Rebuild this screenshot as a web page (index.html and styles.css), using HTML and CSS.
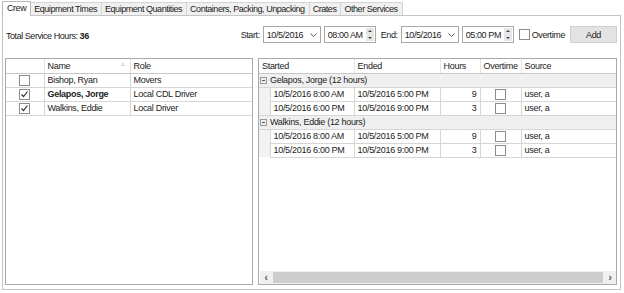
FILE: index.html
```html
<!DOCTYPE html>
<html><head>
  <title>Crew</title>
  <meta charset="UTF-8">
  <link rel="stylesheet" href="styles.css">
</head>
<body>
  <div class="tabs">
    <div class="tab active">Crew</div>
    <div class="tab">Equipment Times</div>
    <div class="tab">Equipment Quantities</div>
    <div class="tab">Containers, Packing, Unpacking</div>
    <div class="tab">Crates</div>
    <div class="tab">Other Services</div>
  </div>
  <div class="panel">
    <div class="toolbar">
      <div class="total">Total Service Hours: <b>36</b></div>
      <div class="range">
        <span class="lbl">Start:</span>
        <div class="date">10/5/2016<svg class="chev" width="7" height="4" viewBox="0 0 7 4"><polyline points="0.5,0.5 3.5,3.5 6.5,0.5" fill="none" stroke="#555" stroke-width="1"/></svg></div>
        <div class="time">08:00 AM<span class="spin"><i class="up"></i><i class="down"></i></span></div>
        <span class="lbl end">End:</span>
        <div class="date">10/5/2016<svg class="chev" width="7" height="4" viewBox="0 0 7 4"><polyline points="0.5,0.5 3.5,3.5 6.5,0.5" fill="none" stroke="#555" stroke-width="1"/></svg></div>
        <div class="time">05:00 PM<span class="spin"><i class="up"></i><i class="down"></i></span></div>
        <label class="ot"><span class="cb"></span>Overtime</label>
        <button class="add" type="button">Add</button>
      </div>
    </div>
    <div class="grids">
      <div class="grid left">
        <table class="tbl">
          <colgroup><col class="c-chk"><col class="c-name"><col></colgroup>
          <tr class="head"><td></td><td class="sort">Name<span class="tri">&#9653;</span></td><td>Role</td></tr>
          <tr><td class="mid"><span class="cb"></span></td><td>Bishop, Ryan</td><td>Movers</td></tr>
          <tr><td class="mid"><span class="cb on"><svg width="9" height="9" viewBox="0 0 9 9"><polyline points="1.5,4.5 3.5,6.5 7.5,1.5" fill="none" stroke="#333" stroke-width="1.2"/></svg></span></td><td class="bold">Gelapos, Jorge</td><td>Local CDL Driver</td></tr>
          <tr><td class="mid"><span class="cb on"><svg width="9" height="9" viewBox="0 0 9 9"><polyline points="1.5,4.5 3.5,6.5 7.5,1.5" fill="none" stroke="#333" stroke-width="1.2"/></svg></span></td><td>Walkins, Eddie</td><td>Local Driver</td></tr>
        </table>
      </div>
      <div class="grid right">
        <table class="tbl">
          <colgroup><col class="c-ind"><col class="c-start"><col class="c-end"><col class="c-hrs"><col class="c-ot"><col></colgroup>
          <tr class="head"><td colspan="2">Started</td><td>Ended</td><td>Hours</td><td class="mid">Overtime</td><td>Source</td></tr>
          <tr class="group"><td colspan="6"><span class="minus"></span>Gelapos, Jorge (12 hours)</td></tr>
          <tr><td class="ind"></td><td>10/5/2016 8:00 AM</td><td>10/5/2016 5:00 PM</td><td class="num">9</td><td class="mid"><span class="cb"></span></td><td>user, a</td></tr>
          <tr><td class="ind"></td><td>10/5/2016 6:00 PM</td><td>10/5/2016 9:00 PM</td><td class="num">3</td><td class="mid"><span class="cb"></span></td><td>user, a</td></tr>
          <tr class="group"><td colspan="6"><span class="minus"></span>Walkins, Eddie (12 hours)</td></tr>
          <tr><td class="ind"></td><td>10/5/2016 8:00 AM</td><td>10/5/2016 5:00 PM</td><td class="num">9</td><td class="mid"><span class="cb"></span></td><td>user, a</td></tr>
          <tr><td class="ind"></td><td>10/5/2016 6:00 PM</td><td>10/5/2016 9:00 PM</td><td class="num">3</td><td class="mid"><span class="cb"></span></td><td>user, a</td></tr>
        </table>
        <div class="hscroll">
          <span class="arr">&#8249;</span>
          <div class="thumb"></div>
          <span class="arr">&#8250;</span>
        </div>
      </div>
    </div>
  </div>
</body></html>
```

FILE: styles.css
```css
body {
  margin: 0;
  background: #fff;
  font-family: "Liberation Sans", Arial, sans-serif;
  font-size: 9px;
  letter-spacing: -0.3px;
  color: #222;
}
.tabs {
  display: flex;
  align-items: flex-end;
  height: 15px;
  padding-left: 2px;
  padding-top: 1px;
  box-sizing: border-box;
  letter-spacing: -0.45px;
}
.tab {
  height: 13px;
  line-height: 12px;
  padding: 0 4px 0 3px;
  background: #f0f0f0;
  border: 1px solid #d4d4d4;
  border-bottom: none;
  border-left: none;
  box-sizing: border-box;
}
.tab.active {
  height: 15px;
  line-height: 13px;
  background: #fff;
  border: 1px solid #b8b8b8;
  border-bottom: none;
  margin-bottom: -1px;
  position: relative;
  z-index: 1;
  padding: 0 4px;
}
.panel {
  margin-left: 2px;
  width: 619px;
  height: 275px;
  border: 1px solid #c4c4c4;
  box-sizing: border-box;
  padding: 0 3px 0 2px;
}
.toolbar {
  display: flex;
  justify-content: space-between;
  height: 42px;
}
.total {
  padding-top: 15px;
  padding-left: 1px;
  letter-spacing: -0.45px;
}
.range {
  display: flex;
  align-items: center;
  height: 17px;
  margin-top: 10px;
  letter-spacing: -0.4px;
}
.lbl {
  margin-right: 3px;
}
.lbl.end {
  margin-left: 5px;
}
.date,
.time {
  display: flex;
  align-items: center;
  justify-content: space-between;
  height: 17px;
  box-sizing: border-box;
  border: 1px solid #a8a8a8;
  padding-left: 3px;
  background: #fff;
}
.date {
  width: 58px;
  padding-right: 3px;
  margin-right: 3px;
}
.time {
  width: 52px;
  padding-right: 1px;
}
.spin {
  display: flex;
  flex-direction: column;
  justify-content: space-around;
  align-items: center;
  width: 8px;
  height: 13px;
  background: #e6e6e6;
}
.spin i {
  width: 0;
  height: 0;
  border-left: 2px solid transparent;
  border-right: 2px solid transparent;
}
.spin .up {
  border-bottom: 2px solid #444;
}
.spin .down {
  border-top: 2px solid #444;
}
.ot {
  display: flex;
  align-items: center;
  margin-left: 5px;
}
.ot .cb {
  margin-right: 2px;
}
.add {
  margin-left: 5px;
  width: 47px;
  height: 17px;
  border: 1px solid #cfcfcf;
  background: #e3e3e3;
  font: inherit;
  letter-spacing: inherit;
  color: #222;
  padding: 0;
}
.cb {
  display: inline-block;
  width: 9px;
  height: 9px;
  border: 1px solid #8c8c8c;
  background: #fff;
  vertical-align: middle;
  box-sizing: content-box;
  line-height: 0;
}
.grids {
  display: flex;
  gap: 5px;
  height: 227px;
}
.grid {
  border: 1px solid #a9a9a9;
  box-sizing: border-box;
  background: #fff;
}
.grid.left {
  width: 248px;
}
.grid.right {
  flex: 1;
  display: flex;
  flex-direction: column;
  justify-content: space-between;
}
.tbl {
  width: 100%;
  border-collapse: collapse;
  table-layout: fixed;
  font-size: inherit;
}
.tbl td {
  height: 14px;
  padding: 0 3px;
  border: 1px solid #d6d6d6;
  white-space: nowrap;
  overflow: hidden;
  box-sizing: border-box;
}
.tbl tr:first-child td {
  border-top: none;
}
.tbl tr td:first-child {
  border-left: none;
}
.tbl tr td:last-child {
  border-right: none;
}
.tbl .head td {
  border-left: none;
  border-right: 1px solid #e4e4e4;
  border-bottom: 1px solid #c8c8c8;
}
.c-chk { width: 38px; }
.c-name { width: 86px; }
.left .tbl tr:not(.head) td:first-child {
  border-right: none;
}
.mid {
  text-align: center;
}
.bold {
  font-weight: bold;
}
.sort {
  position: relative;
}
.tri {
  position: absolute;
  right: 5px;
  top: 1px;
  color: #b0b0b0;
  font-size: 7px;
}
.c-ind { width: 11px; }
.c-start { width: 84px; }
.c-end { width: 86px; }
.c-hrs { width: 40px; }
.c-ot { width: 41px; }
.tbl td.ind {
  background: #f2f2f2;
  border-top: none;
  border-bottom: none;
  padding: 0;
}
.tbl td.num {
  text-align: right;
}
.group td {
  background: #f0f0f0;
  padding-left: 1px;
}
.minus {
  display: inline-block;
  position: relative;
  width: 7px;
  height: 7px;
  border: 1px solid #9a9a9a;
  margin-right: 3px;
  vertical-align: -1px;
  box-sizing: border-box;
}
.minus::after {
  content: "";
  position: absolute;
  left: 1px;
  right: 1px;
  top: 2px;
  height: 1px;
  background: #555;
}
.hscroll {
  display: flex;
  align-items: center;
  height: 13px;
  margin: 0 0 0 1px;
  background: #f0f0f0;
}
.arr {
  width: 12px;
  text-align: center;
  font-size: 10px;
  font-weight: bold;
  color: #555;
}
.thumb {
  flex: 1;
  height: 11px;
  background: #cdcdcd;
  margin: 0 1px;
}
```
